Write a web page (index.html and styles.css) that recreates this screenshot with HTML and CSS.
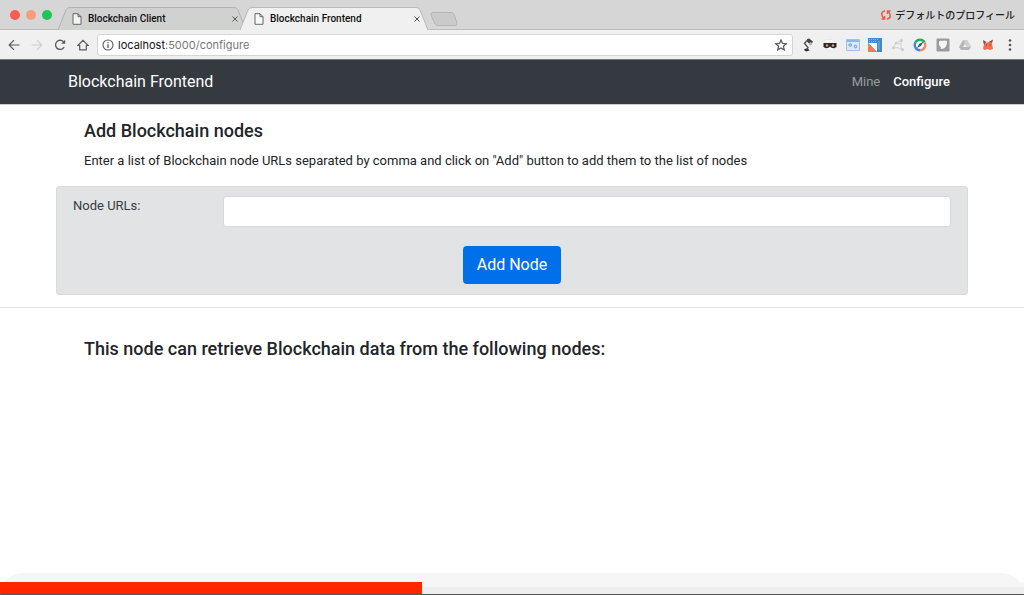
FILE: index.html
```html
<!DOCTYPE html>
<html lang="en">
<head>
<meta charset="utf-8">
<meta name="viewport" content="width=device-width, initial-scale=1">
<title>Blockchain Frontend</title>
<link rel="stylesheet" href="styles.css">
</head>
<body>
<header class="browser">
  <div class="tabstrip">
    <div class="lights">
      <button class="light light-close" aria-label="Close window"></button>
      <button class="light light-min" aria-label="Minimize window"></button>
      <button class="light light-max" aria-label="Zoom window"></button>
    </div>
    <div class="tabs">
      <div class="tab">
        <svg class="tab-shape" viewBox="0 0 188 23" preserveAspectRatio="none" aria-hidden="true"><path d="M0 23L8 3Q9 .5 12 .5H176Q179 .5 180 3L188 23" fill="#d0d2d0" stroke="#b1b1b1"/></svg>
        <svg class="page-icon" viewBox="0 0 10 12" aria-hidden="true"><path d="M1 .7H6L9 3.7V11.3H1ZM6 .7V3.7H9" fill="#f3f3f3" stroke="#666"/></svg>
        <a class="tab-title" href="#">Blockchain Client</a>
        <button class="tab-close" aria-label="Close Blockchain Client"><svg viewBox="0 0 6 6"><path d="M.5 .5L5.500 5.500M5.500 .5L.5 5.500" stroke="#555"/></svg></button>
      </div>
      <div class="tab tab-active">
        <svg class="tab-shape" viewBox="0 0 188 23" preserveAspectRatio="none" aria-hidden="true"><path d="M0 23L8 3Q9 .5 12 .5H176Q179 .5 180 3L188 23" fill="#f0f0f0" stroke="#b9b9b9"/></svg>
        <svg class="page-icon" viewBox="0 0 10 12" aria-hidden="true"><path d="M1 .7H6L9 3.7V11.3H1ZM6 .7V3.7H9" fill="#fafafa" stroke="#666"/></svg>
        <a class="tab-title" href="#">Blockchain Frontend</a>
        <button class="tab-close" aria-label="Close Blockchain Frontend"><svg viewBox="0 0 6 6"><path d="M.5 .5L5.500 5.500M5.500 .5L.5 5.500" stroke="#555"/></svg></button>
      </div>
      <button class="new-tab" aria-label="New tab"><svg viewBox="0 0 28 14"><path d="M3 .5H21Q23 .5 24 2L27 11Q27.500 13.500 25 13.500H8Q6 13.500 5 12L1 3Q.5 .5 3 .5Z" fill="#cacaca" stroke="#b5b5b5"/></svg></button>
    </div>
    <button class="profile">
      <svg viewBox="0 0 12 12" aria-hidden="true"><g fill="none" stroke="#ee5b42" stroke-width="1.500"><path d="M5 2Q1.500 2.500 1.800 5.500Q2 8 4 9.500M1.500 10H4.500V7"/><path d="M7 10Q10.500 9.500 10.200 6.500Q10 4 8 2.500M10.500 2H7.500V5"/></g></svg>
      <span>デフォルトのプロフィール</span>
    </button>
  </div>
  <div class="toolbar">
    <div class="nav-buttons">
      <button aria-label="Back"><svg viewBox="0 0 12 12"><path d="M11.500 6H1.500M6 1.200L1.200 6L6 10.800" fill="none" stroke="#5a5a5a" stroke-width="1.200"/></svg></button>
      <button aria-label="Forward"><svg viewBox="0 0 12 12"><path d="M.5 6H10.500M6 1.200L10.800 6L6 10.800" fill="none" stroke="#d0d0d0" stroke-width="1.200"/></svg></button>
      <button aria-label="Reload"><svg viewBox="0 0 12 12"><path d="M10.200 8A4.600 4.600 0 1 1 9.500 2.700" fill="none" stroke="#5a5a5a" stroke-width="1.300"/><path d="M11.200 .8V4.800H7.200Z" fill="#5a5a5a"/></svg></button>
      <button aria-label="Home"><svg viewBox="0 0 12 12"><path d="M.8 6.500L6 1.300L11.200 6.500H9.300V10.800H2.700V6.500Z" fill="none" stroke="#5a5a5a" stroke-width="1.200"/></svg></button>
    </div>
    <div class="address">
      <svg class="info" viewBox="0 0 12 12" aria-hidden="true"><circle cx="6" cy="6" r="5" fill="none" stroke="#5a5a5a" stroke-width="1.100"/><path d="M6 5.200V9M6 2.900V4.200" stroke="#5a5a5a" stroke-width="1.300"/></svg>
      <a class="url" href="#"><span class="host">localhost</span>:5000/configure</a>
      <button class="star" aria-label="Bookmark"><svg viewBox="0 0 12 12"><path d="M6 .9L7.500 4.400L11.300 4.700L8.400 7.200L9.300 10.900L6 8.900L2.700 10.900L3.600 7.200L.7 4.700L4.500 4.400Z" fill="none" stroke="#555" stroke-width="1.200"/></svg></button>
    </div>
    <div class="extensions">
      <button aria-label="Desk lamp"><svg viewBox="0 0 14 14"><path d="M6 1L8 .5L12 3.500L11 5L8 5.500L6 3.500Z" fill="#444"/><path d="M6 2.500L3.500 5.500L7 9.500L6 11" fill="none" stroke="#555" stroke-width="1.400"/><circle cx="9.500" cy="5.800" r="1.600" fill="#b5b5b5"/><path d="M3 12Q3 10.500 5.500 10.500T8.500 12.500L5 13.500Z" fill="#333"/></svg></button>
      <button aria-label="Masked reader"><svg viewBox="0 0 14 14"><path d="M3 1.500H9L11.500 4V12H3Z" fill="#fbfbfb" stroke="#dedede" stroke-width=".5"/><path d="M.5 5H13.500V9Q11 11 8 9.500L7 8.500L6 9.500Q3 11 .5 9Z" fill="#35251f"/><circle cx="4" cy="7.500" r="1.200" fill="#b9aaa1"/><circle cx="10" cy="7.500" r="1.200" fill="#b9aaa1"/></svg></button>
      <button aria-label="Window settings"><svg viewBox="0 0 14 14"><path d="M.5 1.500H13.500V12.500H.5Z" fill="#dbe8f7" stroke="#a0c0e8"/><path d="M1 2H13V4H1Z" fill="#8db7e8"/><circle cx="4.200" cy="7" r="1.300" fill="#c2d9f4" stroke="#6f9cd3"/><circle cx="9.500" cy="8.500" r="1.300" fill="#c2d9f4" stroke="#6f9cd3"/></svg></button>
      <button aria-label="Page ruler"><svg viewBox="0 0 14 14"><path d="M0 0H14V14H0Z" fill="#4189cf"/><path d="M0 5H9V14Z" fill="#fff"/><path d="M0 5V14H9Z" fill="#ff7657"/><path d="M1 1.500H10M1 3.500H9" stroke="#7bc9af" stroke-dasharray="1 1"/><path d="M11 3V12" stroke="#70aee4"/></svg></button>
      <button aria-label="Node graph"><svg viewBox="0 0 14 14"><path d="M2 10L5 5L10 2.500V9L12 12L6.500 9.500L2 10M5 5L11 6.500" fill="none" stroke="#d6d6d6" stroke-width="1.200"/><g fill="#cdcdcd"><circle cx="2.500" cy="9.800" r="1.500"/><circle cx="5" cy="5" r="1.300"/><circle cx="10.500" cy="2.500" r="1.500"/><circle cx="11.500" cy="11.500" r="1.500"/></g></svg></button>
      <button aria-label="Compass"><svg viewBox="0 0 14 14"><circle cx="7" cy="7" r="5.200" fill="#fff"/><g fill="none" stroke-width="2.400"><path d="M2.500 4.400A5.200 5.200 0 0 1 11.500 4.400" stroke="#1baf65"/><path d="M2.500 4.400A5.200 5.200 0 0 0 7 12.200" stroke="#4385e6"/><path d="M7 12.200A5.200 5.200 0 0 0 11.500 4.400" stroke="#f88765"/></g><path d="M10.500 3.500L8 8L4 10L6 6Z" fill="#2d6779"/></svg></button>
      <button aria-label="Shield"><svg viewBox="0 0 14 14"><rect x=".5" y=".5" width="13" height="13" rx="1" fill="#9b9b9b"/><path d="M3 3.500L5 2.500L6 3Q9 2 11 3Q11.500 8 8 10.500L4.500 11L5 9.500Q2.500 8 3 3.500Z" fill="#f4f4f4"/></svg></button>
      <button aria-label="Drive"><svg viewBox="0 0 14 14"><path d="M5 2H9L13 9L11 12H3L1 9Z" fill="#b7b7b7"/><path d="M7 5.500L9 9H5Z" fill="#efefef"/><path d="M5 2H9L13 9H9Z" fill="#d0d0d0"/></svg></button>
      <button aria-label="Fox wallet"><svg viewBox="0 0 14 14"><path d="M2 3L5 5L8 4L11.500 2L11 6L12 11L9 12L7 11L3 12L2 10L3 7Z" fill="#ef704d"/><path d="M2 2L5.500 4L3 6ZM8 4L12 1.500L11 4.500Z" fill="#79503e"/><path d="M5 7H6M8.500 7H9.500" stroke="#633a31"/></svg></button>
      <button aria-label="Menu"><svg viewBox="0 0 14 14"><g fill="#555"><circle cx="7" cy="2.500" r="1.300"/><circle cx="7" cy="7" r="1.300"/><circle cx="7" cy="11.500" r="1.300"/></g></svg></button>
    </div>
  </div>
</header>
<nav class="navbar">
  <div class="navbar-inner">
    <a class="brand" href="#">Blockchain Frontend</a>
    <div class="links"><a href="#">Mine</a><a class="current" href="#" aria-current="page">Configure</a></div>
  </div>
</nav>
<main>
  <section class="container">
    <div class="intro">
      <h1>Add Blockchain nodes</h1>
      <p>Enter a list of Blockchain node URLs separated by comma and click on "Add" button to add them to the list of nodes</p>
    </div>
    <form class="node-form">
      <div class="field"><label for="urls">Node URLs:</label><input id="urls" type="text"></div>
      <button class="submit" type="button">Add Node</button>
    </form>
  </section>
  <hr>
  <section class="container"><h2>This node can retrieve Blockchain data from the following nodes:</h2></section>
</main>
<footer class="player"><div class="track"><div class="played" style="width:41.2%"></div></div></footer>
</body>
</html>
```
FILE: styles.css
```css
* { box-sizing: border-box; }
body {
  margin: 0;
  min-height: 100vh;
  display: flex;
  flex-direction: column;
  background: #fff;
  color: #212529;
  font-family: Roboto, "Noto Sans CJK JP", sans-serif;
  font-size: 13px;
  line-height: 20px;
}
a { color: inherit; text-decoration: none; }
button { border: 0; padding: 0; background: none; color: inherit; font: inherit; }
svg { display: block; }

.tabstrip {
  height: 30px;
  display: flex;
  align-items: flex-end;
  background: #d6d6d6;
  border-bottom: 1px solid #bcbcbc;
}
.lights { display: flex; align-self: center; gap: 6px; padding: 0 6px 0 10px; }
.light { width: 10px; height: 10px; border-radius: 50%; }
.light-close { background: #fc5b50; }
.light-min { background: #f79d7c; }
.light-max { background: #1dc457; }
.tabs { display: flex; align-items: center; flex: 1; min-width: 0; margin-bottom: -1px; }
.tab {
  position: relative;
  width: 188px;
  height: 23px;
  display: flex;
  align-items: center;
  padding: 0 8px 0 14px;
  margin-right: -6px;
  color: #111;
  font-size: 10px;
  font-weight: 500;
}
.tab-active { z-index: 1; }
.tab-shape { position: absolute; inset: 0; width: 100%; height: 100%; }
.page-icon { position: relative; width: 10px; height: 12px; margin-right: 6px; }
.tab-title { position: relative; flex: 1; }
.tab-close { position: relative; }
.tab-close svg { width: 6px; height: 6px; }
.new-tab { margin-left: 8px; }
.new-tab svg { width: 28px; height: 14px; }
.profile { display: flex; align-items: center; align-self: center; gap: 3px; padding-right: 9px; color: #222; font-family: "Noto Sans CJK JP", sans-serif; font-size: 10px; font-weight: 500; white-space: nowrap; }
.profile svg { width: 12px; height: 12px; }

.toolbar {
  height: 30px;
  display: flex;
  align-items: center;
  padding: 0 7px 0 8px;
  background: #f0f0f0;
  border-bottom: 1px solid #777a7f;
}
.nav-buttons { display: flex; gap: 11px; margin-right: 8px; }
.nav-buttons svg, .info, .star svg { width: 12px; height: 12px; }
.address {
  flex: 1;
  min-width: 0;
  height: 22px;
  display: flex;
  align-items: center;
  gap: 4px;
  padding: 0 5px 0 4px;
  background: #fff;
  border: 1px solid #d5d5d5;
  border-radius: 3px;
}
.url { flex: 1; color: #777; font-family: Inter, sans-serif; font-size: 11px; }
.host { color: #111; }
.extensions { width: 216px; display: flex; justify-content: space-between; margin-left: 8px; }
.extensions svg { width: 14px; height: 14px; }

.navbar { background: #343a40; color: #fff; border-bottom: 1px solid #c9cbcd; }
.navbar-inner {
  max-width: 912px;
  height: 44px;
  margin: 0 auto;
  padding: 0 18px 0 12px;
  display: flex;
  align-items: center;
  justify-content: space-between;
}
.brand { font-size: 16px; }
.links { display: flex; gap: 13px; color: #999c9f; }
.current { color: #fff; font-weight: 500; }

main { flex: 1; }
.container { width: 100%; max-width: 912px; margin: 0 auto; }
.intro { padding: 14px 28px 15px; }
h1, h2 { margin: 0; font-size: 18px; line-height: 24px; font-weight: 500; }
h1 { margin-bottom: 8px; }
h2 { padding: 0 28px; }
p { margin: 0; }
.node-form {
  display: flex;
  flex-direction: column;
  align-items: center;
  gap: 19px;
  padding: 9px 16px 10px;
  background: #e2e3e5;
  border: 1px solid #d9dbde;
  border-radius: 3px;
}
.field { width: 100%; display: grid; grid-template-columns: 150px 1fr; color: #383d41; }
.field input {
  width: 100%;
  height: 31px;
  padding: 4px 8px;
  border: 1px solid #d5dadd;
  border-radius: 3px;
  background: #fff;
  font: inherit;
}
.submit { padding: 7px 14px; border-radius: 4px; background: #0070ea; color: #fff; font-size: 16px; line-height: 24px; }
hr { height: 1px; margin: 12px 0 29px; border: 0; background: #e2e2e2; }

.player { height: 22px; padding-top: 9px; background: #f6f6f6; border-bottom: 1px solid #555; border-radius: 24px 24px 0 0; }
.track { height: 12px; background: linear-gradient(#f6f6f6 5px, #eee 5px); }
.played { height: 12px; background: #ff2600; }
```
